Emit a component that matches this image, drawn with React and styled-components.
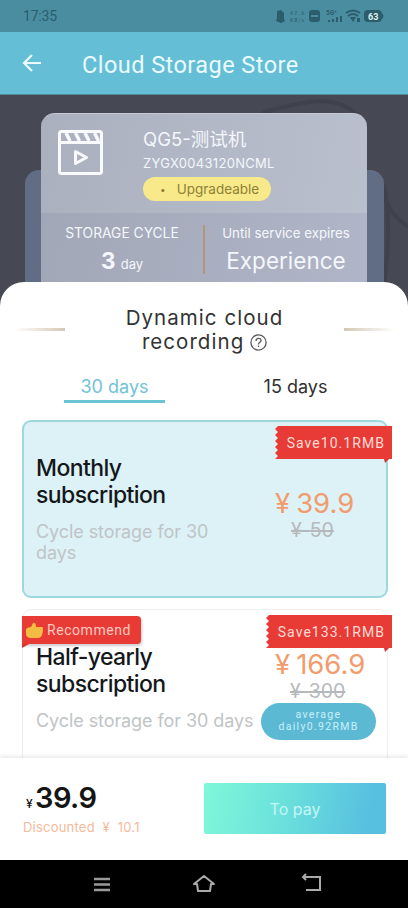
import { useState } from "react";
import styled, { createGlobalStyle } from "styled-components";

const GlobalStyle = createGlobalStyle`
  * { box-sizing: border-box; }
  body {
    margin: 0;
    background: #fff;
    font-family: Roboto, "Noto Sans CJK SC", sans-serif;
  }
`;

const Screen = styled.div`
  width: 408px;
  height: 908px;
  display: flex;
  flex-direction: column;
  overflow: hidden;
  background: #fff;
`;

const StatusBar = styled.div`
  flex: none;
  height: 32px;
  padding: 0 23px;
  display: flex;
  align-items: center;
  justify-content: space-between;
  background: #4a8da1;
  color: #2b5d6d;
`;

const Clock = styled.span`
  font-size: 14px;
  letter-spacing: -0.2px;
`;

const Header = styled.header`
  flex: none;
  height: 63px;
  padding: 3px 0 0 22px;
  display: flex;
  align-items: center;
  gap: 40px;
  background: #64bed6;
  border-bottom: 1px solid #57879a;
  color: #eafaff;
  svg { margin-top: -4px; }
`;

const Title = styled.h1`
  margin: 0;
  font-size: 23.5px;
  font-weight: 400;
  letter-spacing: 0.45px;
`;

const Hero = styled.section`
  flex: none;
  position: relative;
  height: 219px;
  padding: 18px 41px 0;
  background: #464853;
`;

const Backdrop = styled.svg`
  position: absolute;
  inset: 0;
`;

const BackPlate = styled.div`
  position: absolute;
  left: 25px;
  right: 24px;
  top: 75px;
  bottom: 0;
  border-radius: 14px 14px 0 0;
  background: #616d85;
`;

const DeviceCard = styled.div`
  position: relative;
  height: 201px;
  border-radius: 14px 14px 0 0;
  border-top: 1px solid #c5c9d3;
  background: linear-gradient(100deg, #abb0be, #b9c0ce);
  color: #f4f7fb;
  overflow: hidden;
  font-family: Inter, "Noto Sans CJK SC", sans-serif;
`;

const DeviceTop = styled.div`
  height: 99px;
  padding: 14px 0 0 17px;
  display: flex;
  gap: 40px;
`;

const DeviceInfo = styled.div`
  display: flex;
  flex-direction: column;
  align-items: flex-start;
`;

const DeviceName = styled.div`
  font-size: 18.5px;
  line-height: 22px;
`;

const Serial = styled.div`
  margin-top: 4px;
  font-size: 13px;
  line-height: 18px;
  letter-spacing: 0.3px;
`;

const UpgradeTag = styled.div`
  width: 128px;
  height: 24px;
  margin-top: 5px;
  padding-left: 17px;
  display: flex;
  align-items: center;
  gap: 11px;
  border-radius: 12px;
  background: #f8e98a;
  color: #8e8236;
  font-size: 13.5px;
  span { font-size: 10px; }
`;

const Stats = styled.div`
  height: 101px;
  padding-top: 11px;
  display: flex;
  background: linear-gradient(100deg, #a2a7b8, #b0b5c7);
`;

const Stat = styled.div`
  flex: 1;
  text-align: center;
`;

const StatDivider = styled.div`
  width: 2px;
  height: 49px;
  margin-top: 1px;
  background: #b09878;
`;

const StatLabel = styled.div`
  font-size: ${(props) => props.$size}px;
  line-height: 18px;
`;

const StatValue = styled.div`
  margin-top: 5px;
  font-size: 22.5px;
  line-height: 28px;
  b { font-weight: 700; }
  small { font-size: 13px; margin-left: -1px; }
`;

const Sheet = styled.main`
  position: relative;
  flex: none;
  height: 476px;
  margin-top: -32px;
  padding-top: 24px;
  border-radius: 24px 24px 0 0;
  background: #fff;
  overflow: hidden;
`;

const HeadingRow = styled.div`
  height: 48px;
  padding: 0 13px 0 14px;
  display: flex;
  align-items: center;
  justify-content: space-between;
`;

const Ornament = styled.i`
  width: 51px;
  height: 3px;
  margin-bottom: 2px;
  background: linear-gradient(${(props) => props.$to}, #fff, #d4c9b4);
`;

const Heading = styled.h2`
  margin: 0;
  font-family: Inter, sans-serif;
  font-size: 20.5px;
  line-height: 24px;
  font-weight: 400;
  letter-spacing: 1.05px;
  color: #333;
  text-align: center;
  svg { vertical-align: -2px; margin-left: -1px; }
`;

const Tabs = styled.div`
  height: 66px;
  padding: 19px 80px 0 64px;
  display: flex;
  justify-content: space-between;
`;

const Tab = styled.button`
  width: ${(props) => (props.$wide ? 101 : 65)}px;
  height: 30px;
  padding: 3px 0 0;
  margin: 0;
  display: flex;
  justify-content: center;
  border: 0;
  border-bottom: 3px solid ${(props) => (props.$active ? "#6dc3d6" : "transparent")};
  background: none;
  color: ${(props) => (props.$active ? "#71c3d8" : "#303030")};
  font: 400 18px/22px Inter, sans-serif;
  white-space: nowrap;
`;

const Plan = styled.article`
  position: relative;
  width: 366px;
  height: 178px;
  margin: 0 0 11px 22px;
  padding: ${(props) => (props.$active ? "33px 0 0 12px" : "34px 0 0 13px")};
  display: flex;
  border: ${(props) => (props.$active ? "2px solid #9fd7de" : "1px solid #eee")};
  border-radius: 9px;
  background: ${(props) => (props.$active ? "#dcf2f6" : "#fff")};
`;

const PlanText = styled.div`
  width: ${(props) => props.$width}px;
`;

const PlanName = styled.h3`
  width: 150px;
  margin: 0 0 12px;
  font-family: Inter, sans-serif;
  font-size: 23px;
  line-height: 27px;
  font-weight: 500;
  letter-spacing: -0.6px;
  color: #15181b;
`;

const PlanDetail = styled.p`
  margin: 0;
  font-family: Inter, sans-serif;
  font-size: 18px;
  line-height: 21px;
  letter-spacing: -0.08px;
  color: #c0c4c6;
  white-space: nowrap;
`;

const PlanPrice = styled.div`
  padding-top: ${(props) => props.$top}px;
`;

const Price = styled.div`
  margin-left: ${(props) => props.$shift}px;
  font-family: Inter, sans-serif;
  font-size: 27.5px;
  line-height: 30px;
  color: #f29b6c;
`;

const OldPrice = styled.div`
  display: inline-block;
  margin-left: ${(props) => props.$shift}px;
  font-family: Inter, sans-serif;
  font-size: 19.5px;
  line-height: 25px;
  color: #b5b9bb;
  text-decoration: line-through;
  text-decoration-thickness: 2px;
`;

const Yen = styled.span`
  letter-spacing: ${(props) => props.$gap}px;
`;

const SaveTag = styled.div`
  position: absolute;
  right: ${(props) => props.$right}px;
  top: ${(props) => props.$top}px;
  width: ${(props) => props.$width}px;
  height: 33px;
  display: flex;
  align-items: center;
  justify-content: flex-end;
  padding-right: 7px;
  color: #ffdcd8;
  font-size: 14px;
  letter-spacing: 1.05px;
  white-space: nowrap;
  svg { position: absolute; left: 0; top: 0; }
  span { position: relative; }
`;

const RecommendTag = styled.div`
  position: absolute;
  left: -1px;
  top: 6px;
  width: 119px;
  height: 28px;
  padding-left: 4px;
  display: flex;
  align-items: center;
  gap: 4px;
  border-radius: 0 4px 4px 0;
  background: #e93b35;
  box-shadow: 1px 2px 3px #0003;
  color: #ffc9c4;
  font-size: 14px;
  letter-spacing: 0.55px;
  &::after {
    content: "";
    position: absolute;
    left: 0;
    top: 28px;
    border-top: 4px solid #d8332f;
    border-right: 7px solid transparent;
  }
`;

const DailyPill = styled.div`
  position: absolute;
  left: 238px;
  top: 93px;
  width: 115px;
  height: 37px;
  padding-top: 6px;
  border-radius: 19px;
  background: #5cb9d4;
  color: #c9f0fa;
  font-size: 10.5px;
  line-height: 12px;
  letter-spacing: 1.3px;
  text-align: center;
`;

const Footer = styled.footer`
  position: relative;
  flex: none;
  height: 102px;
  padding: 0 22px 0 23px;
  display: flex;
  justify-content: space-between;
  background: #fff;
  box-shadow: 0 -1px 5px #0000001f;
`;

const Total = styled.div`
  height: 56px;
  padding: 24px 0 0 3px;
  font-family: Inter, sans-serif;
  font-size: 29px;
  line-height: 32px;
  font-weight: 600;
  letter-spacing: -0.6px;
  color: #151515;
  small { font-size: 12px; margin-right: 3px; font-weight: 500; }
`;

const Discount = styled.div`
  margin-top: 5px;
  font-family: Inter, sans-serif;
  font-size: 13px;
  line-height: 17px;
  letter-spacing: 0.22px;
  color: #f5b99b;
  white-space: pre;
`;

const PayButton = styled.button`
  width: 182px;
  height: 51px;
  margin-top: 25px;
  padding: 0;
  border: 0;
  border-radius: 2px;
  background: linear-gradient(100deg, #7ef8d9, #6ae0dc 45%, #57bfe0 90%);
  color: #c5f5f4;
  font: 400 16px Inter, sans-serif;
`;

const NavBar = styled.nav`
  position: relative;
  flex: none;
  height: 48px;
  padding: 0 84px 0 90px;
  display: flex;
  align-items: center;
  justify-content: space-between;
  background: #000;
`;

const HomeIcon = styled.svg`
  margin: 2px 6px 0 0;
`;

const StatusIcons = () => (
  <svg width="112" height="18" viewBox="0 0 112 18" fill="#2b5d6d">
    <path d="M4 4 8 3l3 3v6l1 2-4 2-5-2 1-3z" />
    <g fontFamily="Roboto" fontSize="5" fontWeight="700">
      <g opacity="0.7">
        <text x="17" y="7.500" textLength="14">47.0</text>
        <text x="17" y="14.500" textLength="14">KB/s</text>
      </g>
      <text x="53" y="8" fontSize="6.500">5G⁺</text>
    </g>
    <rect x="36" y="3" width="11" height="12" rx="3" />
    <path d="M38 9h7" stroke="#4a8da1" strokeWidth="2" />
    <path d="M55 13h2v2h-2zM59 12h2v3h-2zM63 10h2v5h-2zM67 9h2v6h-2z" />
    <path d="M73 6q7-5 14 0M75 9q5-4 10 0" fill="none" stroke="#2b5d6d" strokeWidth="2" />
    <path d="m77 10 6 0-3 5zM84 11h3v4h-3z" />
    <rect x="91" y="3" width="18" height="12" rx="4" />
    <path d="M109 6q3 3 0 6z" />
    <text x="95" y="12.5" fill="#e2f1ee" fontFamily="Roboto" fontSize="9" fontWeight="700">63</text>
  </svg>
);

const BackIcon = () => (
  <svg width="20" height="20" viewBox="0 0 20 20" fill="none" stroke="currentColor" strokeWidth="2.200">
    <path d="M19 10H2M10 2 2 10l8 8" />
  </svg>
);

const VideoIcon = () => (
  <svg width="45" height="47" viewBox="0 0 45 47" fill="none" stroke="#f8fafc">
    <rect x="1.5" y="3.5" width="42" height="42" rx="2" strokeWidth="3" />
    <path d="M2 14.500h41" strokeWidth="3" />
    <path d="m8 5 4 8M17.500 5l4 8M27 5l4 8M36.500 5l4 8" strokeWidth="3.5" />
    <path d="M17.500 23.500v12l11-6z" strokeWidth="3" strokeLinejoin="round" />
  </svg>
);

const HelpIcon = () => (
  <svg width="17" height="17" viewBox="0 0 17 17" fill="none" stroke="#5a5a5a" strokeWidth="1.300">
    <circle cx="8.500" cy="8.500" r="7.600" />
    <path d="M6 7c0-3.500 5-3.500 5-.5 0 2-2.500 1.500-2.500 4M8.500 11.500v1.500" />
  </svg>
);

const ThumbIcon = () => (
  <svg width="17" height="17" viewBox="0 0 17 17" fill="#f2bd42">
    <path d="M0 7q2-2 5-2l2-4q3-1 3 4h6q2 1 1 4l-1 4q-1 3-4 3H4q-4-1-4-4z" />
  </svg>
);

// red ribbon with a torn left edge and a fold below the right end
const Ribbon = ({ width }) => (
  <svg width={width} height="38" fill="#e93b35">
    <path d={`M0 0H${width}V33H0l3-3-3-3 3-3-3-3 3-3-3-3 3-3-3-3 3-3-3-3 3-3z`} />
    <path d={`M${width - 8} 33h5l-4 4z`} fill="#d9322f" />
  </svg>
);

const App = () => {
  const [days, setDays] = useState(30);
  return (
    <Screen>
      <GlobalStyle />
      <StatusBar>
        <Clock>17:35</Clock>
        <StatusIcons />
      </StatusBar>
      <Header>
        <BackIcon />
        <Title>Cloud Storage Store</Title>
      </Header>
      <Hero>
        <Backdrop width="408" height="219" fill="none" stroke="#3f414c" strokeWidth="4">
          <path d="M262 18Q300 6 325 6Q350 8 364 28" />
          <path d="M380 90Q388 120 408 131" />
          <path d="M384 90q8 40 0 100" />
        </Backdrop>
        <BackPlate />
        <DeviceCard>
          <DeviceTop>
            <VideoIcon />
            <DeviceInfo>
              <DeviceName>QG5-测试机</DeviceName>
              <Serial>ZYGX0043120NCML</Serial>
              <UpgradeTag><span>•</span>Upgradeable</UpgradeTag>
            </DeviceInfo>
          </DeviceTop>
          <Stats>
            <Stat>
              <StatLabel $size={13.8}>STORAGE CYCLE</StatLabel>
              <StatValue><b>3</b> <small>day</small></StatValue>
            </Stat>
            <StatDivider />
            <Stat>
              <StatLabel $size={13.3}>Until service expires</StatLabel>
              <StatValue>Experience</StatValue>
            </Stat>
          </Stats>
        </DeviceCard>
      </Hero>
      <Sheet>
        <HeadingRow>
          <Ornament $to="to right" />
          <Heading>Dynamic cloud<br />recording <HelpIcon /></Heading>
          <Ornament $to="to left" />
        </HeadingRow>
        <Tabs>
          <Tab $wide $active={days === 30} onClick={() => setDays(30)}>30 days</Tab>
          <Tab $active={days === 15} onClick={() => setDays(15)}>15 days</Tab>
        </Tabs>
        <Plan $active>
          <PlanText $width={208}>
            <PlanName>Monthly subscription</PlanName>
            <PlanDetail>Cycle storage for 30<br />days</PlanDetail>
          </PlanText>
          <PlanPrice $top={33}>
            <Price $shift={31}><Yen $gap={6}>¥</Yen>39.9</Price>
            <OldPrice $shift={47}><Yen $gap={8}>¥</Yen>50</OldPrice>
          </PlanPrice>
          <SaveTag $width={117} $right={-6} $top={4}>
            <Ribbon width={117} />
            <span>Save10.1RMB</span>
          </SaveTag>
        </Plan>
        <Plan>
          <PlanText $width={226}>
            <PlanName>Half-yearly subscription</PlanName>
            <PlanDetail>Cycle storage for 30 days</PlanDetail>
          </PlanText>
          <PlanPrice $top={5}>
            <Price $shift={13}><Yen $gap={6}>¥</Yen>166.9</Price>
            <OldPrice $shift={28}><Yen $gap={8}>¥</Yen>300</OldPrice>
          </PlanPrice>
          <RecommendTag><ThumbIcon />Recommend</RecommendTag>
          <SaveTag $width={126} $right={-5} $top={5}>
            <Ribbon width={126} />
            <span>Save133.1RMB</span>
          </SaveTag>
          <DailyPill>average<br />daily0.92RMB</DailyPill>
        </Plan>
      </Sheet>
      <Footer>
        <div>
          <Total><small>¥</small>39.9</Total>
          <Discount>Discounted  ¥  10.1</Discount>
        </div>
        <PayButton>To pay</PayButton>
      </Footer>
      <NavBar>
        <svg width="24" height="24" fill="none" stroke="#999" strokeWidth="2.500">
          <path d="M4 7h16M4 12.500h16M4 18h16" />
        </svg>
        <HomeIcon width="24" height="24" fill="none" stroke="#aaa" strokeWidth="2">
          <path d="M2 11 12 3l10 8h-3l-1 7H6l-1-7z" strokeLinejoin="round" />
        </HomeIcon>
        <svg width="24" height="24" fill="none" stroke="#aaa" strokeWidth="2">
          <path d="M6 2 3 5l3 3M3 5h17v13H6" />
        </svg>
      </NavBar>
    </Screen>
  );
};

export default App;
